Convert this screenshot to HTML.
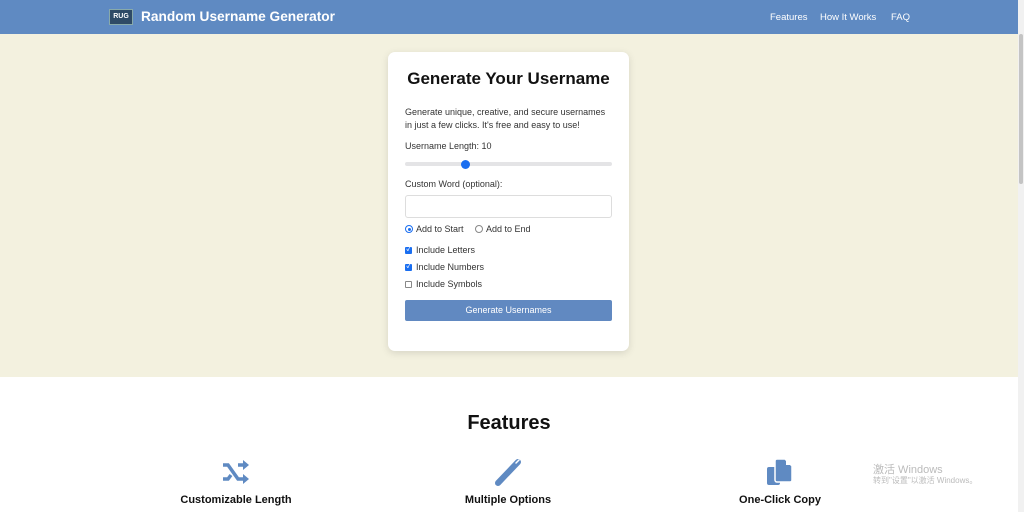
<!DOCTYPE html>
<html><head><meta charset="utf-8"><style>
*{box-sizing:border-box;margin:0;padding:0}
body{width:1024px;height:512px;overflow:hidden;font-family:"Liberation Sans","Noto Sans CJK SC",sans-serif;background:#fff;position:relative;color:#222}
.hdr{position:absolute;left:0;top:0;width:1018px;height:34px;background:#5f8ac2}
.logo{position:absolute;left:109px;top:9px;width:24px;height:16px;background:#2e4a66;color:#fff;font-size:7px;font-weight:bold;text-align:center;line-height:14px;border:1px solid #8aa}
.title{position:absolute;left:141px;top:9px;color:#fff;font-weight:bold;font-size:13.7px}
.nav{position:absolute;top:12px;color:#fff;font-size:9.5px}
.hero{position:absolute;left:0;top:34px;width:1018px;height:343px;background:#f3f1df}
.card{position:absolute;left:388px;top:52px;width:241px;height:299px;background:#fff;border-radius:7px;box-shadow:0 2px 8px rgba(0,0,0,.12)}
.card h1{position:absolute;left:0;width:241px;top:17px;text-align:center;font-size:17px;font-weight:bold;color:#111}
.t{position:absolute;left:17px;font-size:9px;color:#333;line-height:13px}
.track{position:absolute;left:17px;top:110px;width:207px;height:4px;background:#e4e4e6;border-radius:2px}
.thumb{position:absolute;left:73px;top:108px;width:9px;height:9px;border-radius:50%;background:#1a6ef0}
.inp{position:absolute;left:17px;top:143px;width:207px;height:23px;border:1px solid #ddd;border-radius:3px}
.cb{position:absolute;left:17px;width:7px;height:7px;border-radius:1px;color:#fff;font-size:6px;line-height:7px;text-align:center;font-weight:bold}
.on{background:#1a6ef0}
.off{border:1px solid #888}
.btn{position:absolute;left:17px;top:248px;width:207px;height:21px;background:#6189c1;border-radius:2px;color:#fff;font-size:9px;text-align:center;line-height:21px}
.feat{position:absolute;top:412px;left:0;width:1018px;text-align:center;font-size:20px;font-weight:bold;color:#111}
.fl{position:absolute;top:494px;font-size:11px;font-weight:bold;color:#111;text-align:center;width:200px}
.sb{position:absolute;right:0;top:0;width:6px;height:512px;background:#f1f1f1}
.sb div{position:absolute;left:1px;top:34px;width:4px;height:150px;background:#c4c4c4;border-radius:2px}
</style></head><body>
<div class="hdr">
<div class="logo">RUG</div>
<div class="title">Random Username Generator</div>
<div class="nav" style="left:770px">Features</div>
<div class="nav" style="left:820px">How It Works</div>
<div class="nav" style="left:891px">FAQ</div>
</div>
<div class="hero"></div>
<div class="card">
<h1>Generate Your Username</h1>
<div class="t" style="top:54px">Generate unique, creative, and secure usernames<br>in just a few clicks. It's free and easy to use!</div>
<div class="t" style="top:88px">Username Length: 10</div>
<div class="track"></div><div class="thumb"></div>
<div class="t" style="top:126px">Custom Word (optional):</div>
<div class="inp"></div>
<div class="cb" style="top:173px;border-radius:50%;border:1px solid #1a6ef0;background:#fff;width:8px;height:8px"></div>
<div style="position:absolute;left:19.5px;top:175.5px;width:3px;height:3px;border-radius:50%;background:#1a6ef0"></div>
<div class="t" style="top:171px;left:28px">Add to Start</div>
<div class="cb off" style="top:173px;left:87px;border-radius:50%;width:8px;height:8px"></div>
<div class="t" style="top:171px;left:98px">Add to End</div>
<div class="cb on" style="top:195px">✓</div><div class="t" style="top:192px;left:28px">Include Letters</div>
<div class="cb on" style="top:212px">✓</div><div class="t" style="top:209px;left:28px">Include Numbers</div>
<div class="cb off" style="top:229px"></div><div class="t" style="top:226px;left:28px">Include Symbols</div>
<div class="btn">Generate Usernames</div>
</div>
<div class="feat">Features</div>
<svg style="position:absolute;left:222px;top:460px" width="28" height="24" viewBox="0 0 28 24"><g fill="none" stroke="#5f8ac2" stroke-width="3.5"><path d="M1 5h5l10 14h6M1 19h5l3-4M16 5h6"/></g><path d="M21 0l6 5-6 5zM21 14l6 5-6 5z" fill="#5f8ac2"/></svg>
<svg style="position:absolute;left:494px;top:458px" width="30" height="28" viewBox="0 0 30 28"><path d="M4 25L24 4" stroke="#5f8ac2" stroke-width="6" stroke-linecap="round"/><path d="M22 5l3-3" stroke="#fff" stroke-width="1.5" stroke-linecap="round"/></svg>
<svg style="position:absolute;left:767px;top:458px" width="28" height="28" viewBox="0 0 28 28"><rect x="0" y="9" width="13" height="18" rx="2" fill="#5f8ac2"/><path d="M10 1h8l7 7v14a2 2 0 0 1-2 2H10a2 2 0 0 1-2-2V3a2 2 0 0 1 2-2z" fill="#5f8ac2" stroke="#fff" stroke-width="1.5"/><path d="M19 1v6h6" fill="#fff"/></svg>
<div class="fl" style="left:136px">Customizable Length</div>
<div class="fl" style="left:408px">Multiple Options</div>
<div class="fl" style="left:680px">One-Click Copy</div>
<div style="position:absolute;left:873px;top:461px;font-size:11px;color:#bbb">激活 Windows</div>
<div style="position:absolute;left:873px;top:475px;font-size:8px;color:#bbb">转到"设置"以激活 Windows。</div>
<div class="sb"><div></div></div>
</body></html>
